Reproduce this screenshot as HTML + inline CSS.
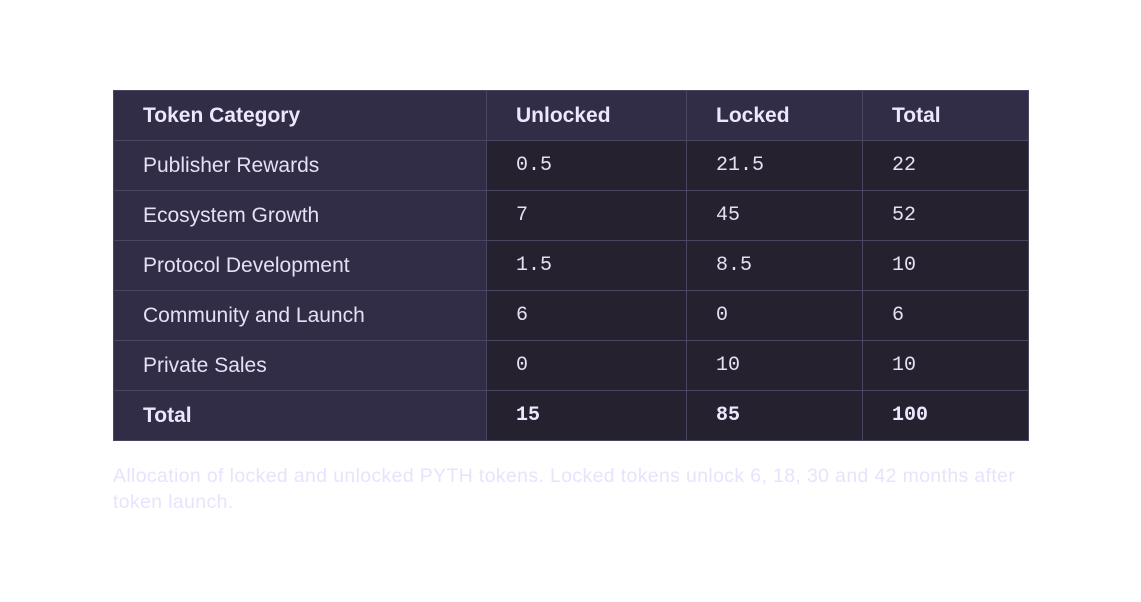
<!DOCTYPE html>
<html><head><style>
body{margin:0;width:1141px;height:602px;background:#fff;font-family:"Liberation Sans",sans-serif;}
table{position:absolute;left:113px;top:90px;border-collapse:collapse;width:916px;}
td,th{height:49px;border:1px solid #4a4560;padding:0 0 0 29px;text-align:left;color:#e6e0f5;font-size:21px;background:#25212f;}
th{background:#312d47;font-weight:bold;color:#eee6ff;}
td.f{background:#312d47;}
td.m{font-family:"Liberation Mono",monospace;font-size:20px;}
tr.t td{font-weight:bold;color:#eee6ff;}
.c{position:absolute;left:113px;top:463px;width:915px;color:#e9e2fc;font-size:19.4px;line-height:26px;letter-spacing:0.4px;}
</style></head><body>
<table>
<tr><th style="width:343px">Token Category</th><th style="width:170px">Unlocked</th><th style="width:146px">Locked</th><th>Total</th></tr>
<tr><td class="f">Publisher Rewards</td><td class="m">0.5</td><td class="m">21.5</td><td class="m">22</td></tr>
<tr><td class="f">Ecosystem Growth</td><td class="m">7</td><td class="m">45</td><td class="m">52</td></tr>
<tr><td class="f">Protocol Development</td><td class="m">1.5</td><td class="m">8.5</td><td class="m">10</td></tr>
<tr><td class="f">Community and Launch</td><td class="m">6</td><td class="m">0</td><td class="m">6</td></tr>
<tr><td class="f">Private Sales</td><td class="m">0</td><td class="m">10</td><td class="m">10</td></tr>
<tr class="t"><td class="f">Total</td><td class="m">15</td><td class="m">85</td><td class="m">100</td></tr>
</table>
<div class="c">Allocation of locked and unlocked PYTH tokens. Locked tokens unlock 6, 18, 30 and 42 months after token launch.</div>
</body></html>
